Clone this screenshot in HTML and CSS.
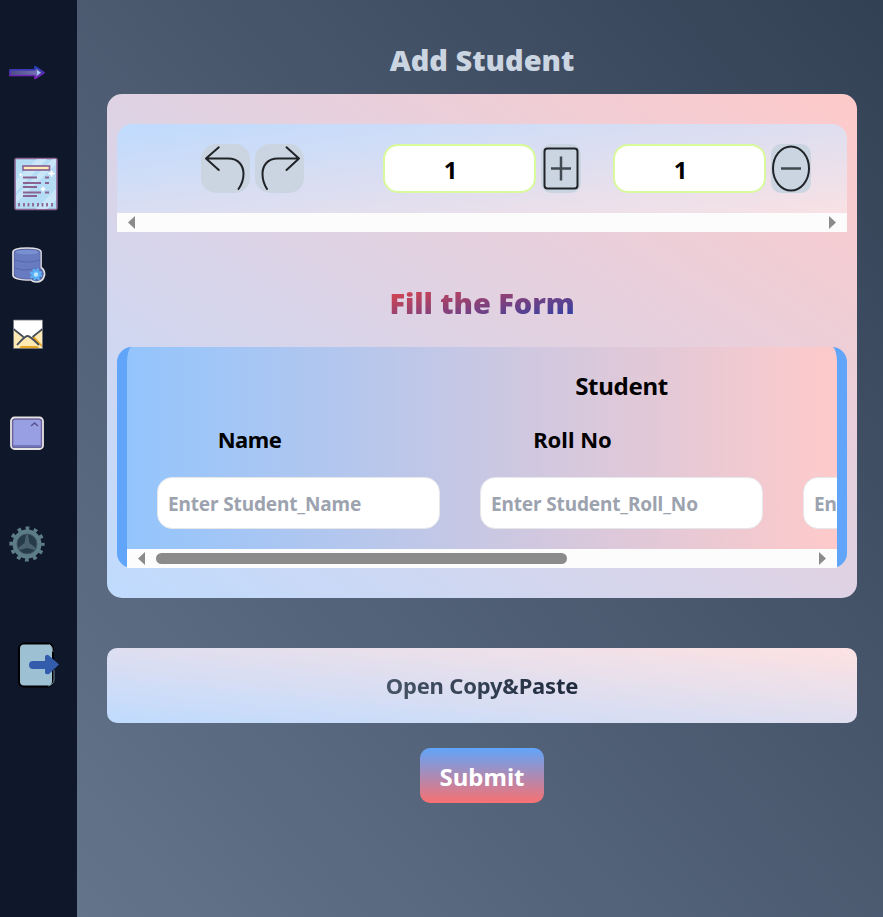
FILE: index.html
```html
<!DOCTYPE html>
<html lang="en">
<head>
<meta charset="utf-8">
<title>Add Student</title>
<link rel="stylesheet" href="styles.css">
</head>
<body>
<nav class="sidebar">
  <svg class="icon arrow" viewBox="0 0 80 24" width="80" height="24">
    <defs><linearGradient id="ag" gradientUnits="userSpaceOnUse" x1="0" y1="7" x2="0" y2="18"><stop offset="0" stop-color="#2442b8"/><stop offset="1" stop-color="#8020b8"/></linearGradient><linearGradient id="af"><stop offset="0" stop-color="#4c4e86"/><stop offset=".8" stop-color="#7471b2"/><stop offset="1" stop-color="#241b68"/></linearGradient></defs>
    <path d="M10 9.800H35V6.500L44 12.700L35 18.500V15.500H10Z" fill="url(#af)" stroke="url(#ag)" stroke-width="1.700" stroke-linejoin="round"/>
    <path d="M37 10l4 2.700-4 2.500z" fill="#a9c9f5"/>
  </svg>
  <svg class="icon report" viewBox="0 0 80 56" width="80" height="56">
    <rect x="15" y="2.500" width="42" height="51" rx="1.500" fill="#b5dcf5" stroke="#8c6594" stroke-width="1.600"/>
    <path d="M16 24L37 3h10L16 36zM16 40L53 3h3v5L16 47zM36 53L56 33v11l-9 9z" fill="#d2eaf9" opacity=".75"/>
    <rect x="23" y="10" width="26.500" height="4" fill="#ffebb3" stroke="#8c6594" stroke-width="1.700"/>
    <path d="M23 21.500h14M45 21.500h4M23 27h18M45 27h4M23 31h14M23 36.500h18M45 36.500h4M23 40h14" stroke="#896493" stroke-width="1.800"/>
    <path d="M19 47v3.500M24 47v3.500M28.500 47v3.500M33 47v3.500M38 47v3.500M42.500 47v3.500M47 47v3.500M52 47v3.500" stroke="#896493" stroke-width="1.800"/>
    <path d="M51.500 14l1 2.500 2.500 1-2.500 1-1 2.500-1-2.500-2.500-1 2.500-1zM20.500 17l.5 1 1 .5-1 .5-.5 1-.5-1-1-.5 1-.5zM43 30.500l.8 1.700 1.700.8-1.700.8-.8 1.700-.8-1.700-1.700-.8 1.700-.8z" fill="#fff" stroke="#fff" stroke-width=".5"/>
  </svg>
  <svg class="icon database" viewBox="0 0 80 40" width="80" height="40">
    <path d="M13 6Q13 2 27 2T41 6V21.500Q45 24 44.500 29Q43 36 36 36Q33 36 31 34Q13 34 13 29Z" fill="#56639f" stroke="#e0e0e4" stroke-width="1.700"/>
    <path d="M14.500 5.500Q27 2.500 40 5.500V27Q38 33 27 33T14.500 28Z" fill="#697bc0" stroke="#5c68a8" stroke-width=".8"/>
    <ellipse cx="27" cy="6" rx="11.500" ry="2.300" fill="#7990d0"/>
    <path d="M15 14Q27 18 40 14M15 22Q26 26 36 22" fill="none" stroke="#5563a8" stroke-width=".9"/>
    <circle cx="36" cy="28.500" r="4.300" fill="#5baff6" stroke="#5baff6" stroke-width="4" stroke-dasharray="1.900 1.477"/>
    <circle cx="36" cy="28.500" r="4.500" fill="#5baff6"/>
    <circle cx="36" cy="28.500" r="2.200" fill="#b8e5ff"/>
  </svg>
  <svg class="icon mail" viewBox="0 0 80 34" width="80" height="34">
    <path d="M13.500 2H42.500V30.500H13.500Z" fill="#ffeab4"/>
    <path d="M13.500 2H42.500V11L32 19.500Q28 14 23.500 19.500L13.500 11Z" fill="#fff"/>
    <path d="M32 20l10-8v17zM21 28h16l3 2.500H19z" fill="#e6a629"/>
    <path d="M34 18l8-6v15z" fill="#ffeab4"/>
    <path d="M13.500 11L23.500 19M42.500 11L32.500 19M17 27Q25 18 27.500 18T39 27" fill="none" stroke="#46505c" stroke-width="1.800"/>
    <path d="M13.500 2H42.500V30.500H13.500Z" fill="none" stroke="#696d76" stroke-width=".8"/>
  </svg>
  <svg class="icon tile" viewBox="0 0 80 36" width="80" height="36">
    <rect x="11" y="2.500" width="32" height="31.500" rx="3.500" fill="#625e91" stroke="#e7e4e4" stroke-width="1.800"/>
    <rect x="12.800" y="4.200" width="28.500" height="28" rx="2.500" fill="#989fe3" stroke="#69609b"/>
    <path d="M13.500 30h27v2h-27z" fill="#7277bd"/>
    <path d="M31 11l3.500-3 3.500 3" fill="none" stroke="#595290" stroke-width="1.500"/>
  </svg>
  <svg class="icon gear" viewBox="0 0 80 38" width="80" height="38">
    <circle cx="27" cy="19" r="15.800" fill="none" stroke="#5c7c89" stroke-width="3.600" stroke-dasharray="3.800 4.473" stroke-dashoffset="1.900"/>
    <circle cx="27" cy="19" r="12.300" fill="#263b49" stroke="#5c7c89" stroke-width="4.400"/>
    <path d="M26 10h2l1.500 8 6.500 5-1.500 2L27 23l-7.500 2-1.500-2 6.500-5z" fill="#49616e"/>
    <circle cx="27" cy="19" r="10" fill="none" stroke="#405662" stroke-width="1"/>
  </svg>
  <svg class="icon logout" viewBox="0 0 80 50" width="80" height="50">
    <rect x="19" y="3.500" width="34" height="43" rx="5" fill="#9dc0d3" stroke="#000" stroke-width="2"/>
    <path d="M49 4q4 3 4 8M54 30v9q0 6-6 7" fill="none" stroke="#8ba8b8" stroke-width=".8"/>
    <path d="M33 21h12v-4.500q1-3 4-1L59 24.500 49 34q-3 1-4-1v-4H33q-4 0-4-4t4-4z" fill="#345cac"/>
  </svg>
</nav>
<main class="page">
  <h1 class="heading">Add Student</h1>
  <section class="card">
    <div class="toolbar">
      <div class="tools">
        <button class="tool"><svg viewBox="0 0 49 49" width="49" height="49"><path d="M5 14.500H27C38 14.500 42.500 22 42.500 30Q42.500 38 37.500 45M17.800 3.300L5 14.500L17.800 26" class="line"/></svg></button>
        <button class="tool"><svg viewBox="0 0 49 49" width="49" height="49"><path d="M44 14.500H23C12 14.500 7.500 22 7.500 30Q7.500 38 12 45M31.500 3.300L44 14.500L31.500 26" class="line"/></svg></button>
        <div class="count first">1</div>
        <button class="tool narrow"><svg viewBox="0 0 40 49" width="40" height="49"><rect x="3.500" y="4.500" width="33" height="40" rx="3" class="line"/><path d="M10 24.500h20M20 12.500v24" class="sign"/></svg></button>
        <div class="count second">1</div>
        <button class="tool narrow"><svg viewBox="0 0 40 49" width="40" height="49"><ellipse cx="20" cy="24.500" rx="18" ry="22" class="line"/><path d="M10 24.500h20" class="sign"/></svg></button>
      </div>
      <div class="scrollbar"><i class="left"></i><i class="right"></i></div>
    </div>
    <h2 class="heading form-title"><span>Fill the Form</span></h2>
    <div class="form">
      <div class="viewport">
        <div class="sheet">
          <h3 class="group">Student</h3>
          <div class="fields">
            <label><span class="label name">Name</span><input placeholder="Enter Student_Name"></label>
            <label><span class="label">Roll No</span><input placeholder="Enter Student_Roll_No"></label>
            <label><span class="label"></span><input placeholder="Enter"></label>
          </div>
        </div>
      </div>
      <div class="scrollbar"><i class="left"></i><b class="thumb"></b><i class="right"></i></div>
    </div>
  </section>
  <button class="paste"><span>Open Copy&amp;Paste</span></button>
  <button class="submit">Submit</button>
</main>
</body>
</html>
```
FILE: styles.css
```css
* { box-sizing: border-box; }
body {
  margin: 0;
  height: 917px;
  display: flex;
  overflow: hidden;
  font-family: "Noto Sans", "Open Sans", sans-serif;
  font-weight: 700;
  background: #0f172a;
}
h1, h2, h3 { margin: 0; }
button { border: 0; padding: 0; font: inherit; }
svg { display: block; }
.sidebar { width: 77px; flex: none; padding-top: 60px; background: #0f172a; overflow: hidden; }
.report { margin-top: 72px; }
.database { margin-top: 34px; }
.mail { margin-top: 32px; }
.tile { margin-top: 63px; }
.gear { margin-top: 74px; }
.logout { margin-top: 77px; }
.page {
  flex: 1;
  min-width: 0;
  padding: 35px 26px 0 30px;
  display: flex;
  flex-direction: column;
  align-items: center;
  background: linear-gradient(to top right, #64748b, #334155);
}
.heading { height: 50px; line-height: 50px; font-size: 29px; font-weight: 900; color: #cbd5e1; white-space: nowrap; }
.card {
  width: 750px;
  height: 504px;
  margin-top: 9px;
  padding: 30px 10px;
  border-radius: 15px;
  background: linear-gradient(to top right, #bfdbfe, #fecaca);
}
.toolbar { height: 108px; border-radius: 15px 15px 0 0; background: linear-gradient(to bottom right, #bfdbfe, #fee2e2); }
.tools { height: 89px; padding: 20px 0 0 84px; display: flex; gap: 5px; }
.tool { width: 49px; height: 49px; border-radius: 15px; background: #cbd5e1; }
.narrow { width: 40px; border-radius: 10px; }
.line { fill: none; stroke: #202428; stroke-width: 2; stroke-linecap: round; stroke-linejoin: round; }
.sign { fill: none; stroke: #414950; stroke-width: 2.5; }
.count { width: 153px; height: 49px; line-height: 48px; padding-right: 18px; text-align: center; font-size: 24px; border: 2px solid #d9f99d; border-radius: 15px; background: #fff; }
.first { margin-left: 74px; }
.second { margin-left: 27px; }
.scrollbar { height: 19px; padding: 0 11px; display: flex; align-items: center; background: #fcfcfc; }
.scrollbar i { width: 7px; height: 13px; background: #8b8b8b; }
.left { clip-path: polygon(100% 0, 100% 100%, 0 50%); }
.right { margin-left: auto; clip-path: polygon(0 0, 100% 50%, 0 100%); }
.thumb { width: 411px; height: 11px; margin-left: 11px; border-radius: 6px; background: #8b8b8b; }
.form-title { margin: 46px 0 19px; text-align: center; letter-spacing: -0.08px; }
.form-title span { display: inline-block; height: 40px; line-height: 40px; background-image: linear-gradient(to bottom right, #ef4444, #1e40af); }
.form-title span, .paste span { color: transparent; background-clip: text; -webkit-background-clip: text; }
.form { height: 221px; border: solid #60a5fa; border-width: 0 10px; border-radius: 15px; background: linear-gradient(to right, #93c5fd, #fecaca); }
.viewport { height: 202px; overflow: hidden; }
.sheet { width: 989px; padding: 20px 30px 0; }
.group { height: 38px; line-height: 38px; text-align: center; font-size: 24px; letter-spacing: -0.3px; }
.fields { display: flex; gap: 40px; }
.fields label { width: 283px; }
.label { display: block; height: 72px; padding: 17px 98px 0 0; line-height: 35px; text-align: center; font-size: 22px; }
.name { letter-spacing: -0.5px; }
.fields input { display: block; width: 283px; height: 52px; padding: 2px 10px 0; border: 1px solid #e5e7eb; border-radius: 15px; font: inherit; font-size: 19px; letter-spacing: -0.13px; background: #fff; }
.fields input::placeholder { color: #9ca3af; opacity: 1; }
.paste { width: 750px; height: 75px; flex: none; margin-top: 50px; padding-bottom: 2px; border-radius: 10px; font-size: 22px; letter-spacing: -0.2px; background: linear-gradient(to top right, #bfdbfe, #fee2e2); }
.paste span { background-image: linear-gradient(to right, #475569, #1e293b); }
.submit { width: 124px; height: 55px; margin-top: 25px; padding-top: 2px; border-radius: 10px; font-size: 24px; color: #fff; background: linear-gradient(to bottom, #60a5fa, #f87171); }
```
